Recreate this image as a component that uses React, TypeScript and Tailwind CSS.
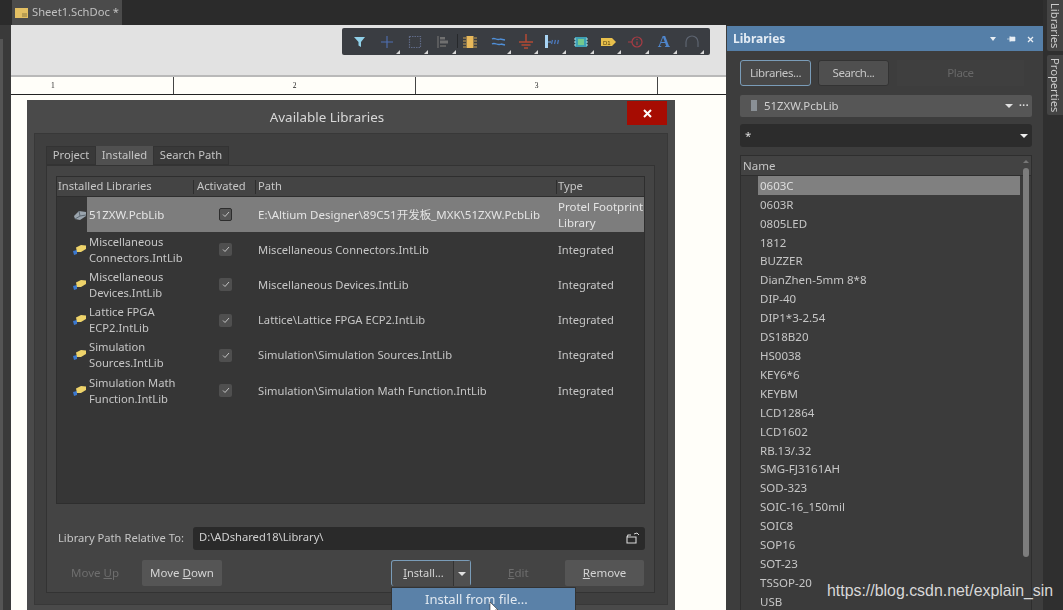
import React from "react";

const F = "font-['Noto_Sans','Open_Sans',sans-serif]";

function Tri() {
  return <span className="absolute right-[1px] bottom-[1px] w-0 h-0 border-l-[4px] border-l-transparent border-b-[4px] border-b-[#d8d8d8]" />;
}

const noTri = [0, 4];

const toolIcons: React.ReactNode[] = [
  <svg key="0" width="14" height="12" viewBox="0 0 14 12"><path d="M1 1h11L8 6v5L5.500 9.500V6z" fill="#8fd0e8" /></svg>,
  <svg key="1" width="14" height="14" viewBox="0 0 14 14"><path d="M7 1v12M1 7h12" stroke="#4f70b4" strokeWidth="1.100" /></svg>,
  <svg key="2" width="14" height="14" viewBox="0 0 14 14"><rect x="1.500" y="1.500" width="11" height="11" fill="none" stroke="#5f6a86" strokeWidth="1.200" strokeDasharray="1.500 1" /></svg>,
  <svg key="3" width="12" height="14" viewBox="0 0 12 14"><path d="M1 1v12" stroke="#707070" strokeWidth="1.200" /><rect x="3" y="2" width="5" height="2.500" fill="#707070" /><rect x="3" y="5.500" width="8" height="3" fill="#707070" /><rect x="3" y="10" width="6" height="2" fill="#5f5f5f" /></svg>,
  <svg key="4" width="14" height="14" viewBox="0 0 14 14"><rect x="3.500" y="1" width="7" height="12" fill="#e9b95a" /><path d="M0 3h3M0 6h3M0 9h3M0 12h3M11 3h3M11 6h3M11 9h3M11 12h3" stroke="#c9a252" /></svg>,
  <svg key="5" width="15" height="12" viewBox="0 0 15 12"><path d="M1 3c3-2 5 2 8 0M1 8c3-2 6 2 9 0M9 3l5 1M10 8l4 1" fill="none" stroke="#4f8fd8" strokeWidth="1.300" /></svg>,
  <svg key="6" width="14" height="15" viewBox="0 0 14 15"><path d="M7 0v8M0 8h14M2.500 11h9M5 14h4" stroke="#b44a34" strokeWidth="1.500" /></svg>,
  <svg key="7" width="16" height="14" viewBox="0 0 16 14"><rect x="0" y="0" width="3" height="13" fill="#a8d4f4" /><path d="M3 7h3" stroke="#6fa8e0" /><path d="M6.500 9l1-4M9.500 9l1-4M12.500 9l1-4" stroke="#4b77ba" strokeWidth="1.300" /></svg>,
  <svg key="8" width="14" height="12" viewBox="0 0 14 12"><rect x="1" y="1" width="12" height="10" fill="#3fa0b4" /><rect x="4" y="3" width="6" height="6" fill="#74c98e" /><path d="M0 3h2M0 6h2M0 9h2M12 3h2M12 6h2M12 9h2" stroke="#b8dce0" /></svg>,
  <svg key="9" width="15" height="10" viewBox="0 0 15 10"><path d="M0 1h11l4 4-4 4H0z" fill="#e9c04c" /><text x="2" y="7.500" fontSize="6" fill="#4a3a10" fontFamily="Liberation Sans">D1</text></svg>,
  <svg key="10" width="16" height="14" viewBox="0 0 16 14"><circle cx="9" cy="7" r="5" fill="none" stroke="#a93c44" strokeWidth="1.200" /><path d="M9 4v1M9 6.500V10M0 7h4" stroke="#a93c44" strokeWidth="1.200" /></svg>,
  <span key="11" className="text-[17px] leading-none font-bold text-[#4f86cc] font-['Liberation_Serif',serif]">A</span>,
  <svg key="12" width="14" height="13" viewBox="0 0 14 13"><path d="M1 12V7a6 6 0 0 1 12 0v5" fill="none" stroke="#5d6470" strokeWidth="1.200" /></svg>,
];

function LibIcon({ pcb }: { pcb?: boolean }) {
  if (pcb)
    return (
      <svg width="14" height="12" viewBox="0 0 14 12" className="shrink-0">
        <path d="M1 7l5-5 7 1v4l-6 4-5-1z" fill="#9aa4ad" />
        <path d="M6 2l1 5-5 3M7 7l6-1" stroke="#5b6670" fill="none" />
      </svg>
    );
  return (
    <svg width="14" height="12" viewBox="0 0 14 12" className="shrink-0">
      <path d="M0 7l4-1v4l-3 1z" fill="#3b78d0" />
      <path d="M3 3.500l5-2.500 5 .5v3.500L8 8H4z" fill="#eed36a" />
    </svg>
  );
}

function Check({ active }: { active?: boolean }) {
  return (
    <span className={`w-[13px] h-[13px] rounded-[2px] flex items-center justify-center ${active ? "bg-[#565656] border border-[#2d2d2d]" : "bg-[#4f4f4f]"}`}>
      <svg width="8" height="7" viewBox="0 0 8 7"><path d="M1 3.500l2 2 4-4.500" fill="none" stroke="#c4c4c4" strokeWidth="1" /></svg>
    </span>
  );
}

const rows = [
  { n: ["51ZXW.PcbLib"], p: "E:\\Altium Designer\\89C51开发板_MXK\\51ZXW.PcbLib", t: ["Protel Footprint", "Library"], sel: true },
  { n: ["Miscellaneous", "Connectors.IntLib"], p: "Miscellaneous Connectors.IntLib", t: ["Integrated"] },
  { n: ["Miscellaneous", "Devices.IntLib"], p: "Miscellaneous Devices.IntLib", t: ["Integrated"] },
  { n: ["Lattice FPGA", "ECP2.IntLib"], p: "Lattice\\Lattice FPGA ECP2.IntLib", t: ["Integrated"] },
  { n: ["Simulation", "Sources.IntLib"], p: "Simulation\\Simulation Sources.IntLib", t: ["Integrated"] },
  { n: ["Simulation Math", "Function.IntLib"], p: "Simulation\\Simulation Math Function.IntLib", t: ["Integrated"] },
];

const parts = ["0603C","0603R","0805LED","1812","BUZZER","DianZhen-5mm 8*8","DIP-40","DIP1*3-2.54","DS18B20","HS0038","KEY6*6","KEYBM","LCD12864","LCD1602","RB.13/.32","SMG-FJ3161AH","SOD-323","SOIC-16_150mil","SOIC8","SOP16","SOT-23","TSSOP-20","USB"];

function Caret({ c = "#e0e0e0" }: { c?: string }) {
  return <span className="w-0 h-0 border-l-[4px] border-r-[4px] border-t-[4px] border-l-transparent border-r-transparent" style={{ borderTopColor: c }} />;
}

export default function App() {
  return (
    <div className="relative w-[1063px] h-[610px] overflow-hidden">
      <div className={`w-[1063px] h-[610px] overflow-hidden flex flex-col bg-[#2c2c2c] text-[11.2px] text-[#c6c6c6] blur-[0.4px] ${F}`}>
        <div className="h-[25px] shrink-0 flex bg-[#2b2b2b] pl-[12px]">
          <div className="w-[110px] flex items-center gap-[4px] pl-[3px] bg-[#4b4b4b] text-[#c0c0c0]">
            <svg width="13" height="10" viewBox="0 0 13 10"><rect width="13" height="10" fill="#e3bf63" /><path d="M7 6h5M7 8h5" stroke="#8d7a42" /></svg>
            <span>Sheet1.SchDoc *</span>
          </div>
        </div>
        <div className="flex-1 min-h-0 flex">
          <div className="w-[11px] shrink-0 bg-[#3a3a3a] pt-[14px]">
            <div className="w-[3px] h-full bg-[#555]" />
          </div>
          <div className="w-[715px] shrink-0 flex flex-col bg-[#fffef9]">
            <div className="h-[52px] shrink-0 bg-[#e2e2e2] border-b-[2px] border-[#b9b9b9] pt-[3px] pl-[331px]">
              <div className="w-[368px] h-[27px] rounded-[2px] bg-[#3a3d42] flex items-center pl-[4px]">
                {toolIcons.map((ic, i) => (
                  <div key={i} className="relative w-[27.650px] h-full flex items-center justify-center">
                    {ic}
                    {noTri.includes(i) ? null : <Tri />}
                    {i === 4 ? <span className="absolute left-0 top-[6px] w-px h-[14px] bg-[#26282b]" /> : null}
                  </div>
                ))}
              </div>
            </div>
            <div className="h-[18px] shrink-0 border-b border-[#222] flex text-[7.500px] text-[#222] font-['Liberation_Serif',serif]">
              <div className="w-[163px] border-r border-[#444] flex items-center justify-start pl-[40px]">1</div>
              <div className="w-[242px] border-r border-[#444] flex items-center justify-center">2</div>
              <div className="w-[242px] border-r border-[#444] flex items-center justify-center">3</div>
              <div className="flex-1" />
            </div>
            <div className="flex-1 min-h-0 pl-[16px] pt-[5px]">
              <div className="relative w-[648px] h-[520px] bg-[#4a4a4a] flex flex-col">
                <div className="h-[33px] shrink-0 flex items-center justify-center pr-[48px] pt-[1px] text-[13.400px] text-[#d8d8d8]">Available Libraries</div>
                <button className="absolute right-[8px] top-[1px] w-[40px] h-[24px] bg-[#a60c02] flex items-center justify-center">
                  <svg width="9" height="9" viewBox="0 0 9 9"><path d="M1 1l7 7M8 1l-7 7" stroke="#fff" strokeWidth="2" /></svg>
                </button>
                <div className="mx-[7px] h-[472px] shrink-0 bg-[#3f3f3f] border border-[#383838] pt-[12px] px-[11px]">
                  <div className="flex h-[19px] text-[#c4c4c4]">
                    <div className="w-[50px] flex items-center justify-center bg-[#393939] border border-[#333]">Project</div>
                    <div className="w-[57px] flex items-center justify-center bg-[#505050]">Installed</div>
                    <div className="w-[76px] flex items-center justify-center bg-[#393939] border border-[#333]">Search Path</div>
                  </div>
                  <div className="w-[609px] h-[428px] border border-[#333] bg-[#444] pt-[10px] px-[9px] flex flex-col">
                    <div className="w-[589px] h-[328px] shrink-0 border border-[#2e2e2e] bg-[#363636]">
                      <div className="h-[20px] flex items-center bg-[#444] border-b border-[#2e2e2e]">
                        <div className="w-[137px] pl-[1px] border-r border-[#2e2e2e] h-[14px] flex items-center">Installed Libraries</div>
                        <div className="w-[62px] pl-[3px] border-r border-[#2e2e2e] h-[14px] flex items-center">Activated</div>
                        <div className="w-[301px] pl-[2px] border-r border-[#2e2e2e] h-[14px] flex items-center">Path</div>
                        <div className="pl-[1px] h-[14px] flex items-center">Type</div>
                      </div>
                      {rows.map((r) => (
                        <div key={r.p} className="h-[35.200px] flex items-center leading-[16px]">
                          <div className="w-[30px] shrink-0 flex justify-end -mr-[1px]"><LibIcon pcb={r.sel} /></div>
                          <div className={`flex-1 h-full flex items-center ${r.sel ? "bg-[#7d7d7d] text-[#e4e4e4] text-[11.500px] ml-[1px]" : "ml-[1px]"}`}>
                            <div className="w-[107px] shrink-0 pl-[2px]">{r.n.map((x) => <div key={x}>{x}</div>)}</div>
                            <div className="w-[62px] shrink-0 flex justify-center pl-[1px]"><Check active={r.sel} /></div>
                            <div className="w-[300px] shrink-0 pl-[2px] whitespace-nowrap font-['Noto_Sans','Noto_Sans_CJK_SC',sans-serif]">{r.p}</div>
                            <div className="pl-[2px]">{r.t.map((x) => <div key={x} className="whitespace-nowrap">{x}</div>)}</div>
                          </div>
                        </div>
                      ))}
                    </div>
                    <div className="mt-[22px] h-[24px] flex items-center shrink-0">
                      <span className="w-[137px] pl-[2px] shrink-0">Library Path Relative To:</span>
                      <div className="flex-1 h-[23px] rounded-[3px] bg-[#2a2a2a] flex items-center justify-between pl-[6px] pr-[4px] pb-[1px] text-[#d0d0d0]">
                        <span>D:\ADshared18\Library\</span>
                        <svg width="15" height="12" viewBox="0 0 15 12"><path d="M1 5h9v6H1zM1 5l1-2h3" fill="none" stroke="#d8d8d8" strokeWidth="1.100" /><path d="M8 2l3-1 2 2" fill="none" stroke="#d8d8d8" /></svg>
                      </div>
                    </div>
                    <div className="mt-[10px] h-[26px] flex items-center relative shrink-0 text-[11.500px]">
                      <span className="w-[80px] pl-[15px] text-[#6e6e6e]">Move <u>U</u>p</span>
                      <div className="ml-[6px] w-[80px] h-[26px] rounded-[2px] bg-[#555] flex items-center justify-center text-[#d4d4d4]"><span>Move <u>D</u>own</span></div>
                      <div className="ml-[169px] w-[80px] h-[26px] rounded-[3px] border border-[#7a9cb8] border-b-0 bg-[#4a4a4a] flex">
                        <div className="w-[61px] pl-[2px] flex items-center justify-center text-[#d4d4d4] text-[11px]"><span><u>I</u>nstall...</span></div>
                        <div className="flex-1 border-l border-[#333] bg-[#505050] flex items-center justify-center"><Caret /></div>
                      </div>
                      <span className="w-[94px] pl-[37px] text-[#6e6e6e]"><u>E</u>dit</span>
                      <div className="w-[79px] h-[26px] rounded-[2px] bg-[#555] flex items-center justify-center text-[#d4d4d4]"><span><u>R</u>emove</span></div>
                      <div className="absolute left-[336px] top-[28px] w-[183px] h-[30px] bg-[#5a81a8] pl-[33px] pt-[2px] text-[13px] text-[#e0e8f0] shadow-[0_0_0_1px_#333]">
                        Install from file...
                        <svg className="absolute left-[97px] top-[14px]" width="10" height="14" viewBox="0 0 10 14"><path d="M1 0v11l3-2 2 4 2-1-2-4h3z" fill="#fff" stroke="#333" strokeWidth=".6" /></svg>
                      </div>
                    </div>
                  </div>
                </div>
              </div>
            </div>
          </div>
          <div className="w-[317px] shrink-0 pl-[1px] bg-[#3d3d3d] flex flex-col mt-[1px] text-[11.500px]">
            <div className="h-[25px] shrink-0 bg-[#557fa8] flex items-center justify-between pl-[6px] pr-[9px] pt-[1px]">
              <span className="text-[12px] font-bold text-[#e4ecf4]">Libraries</span>
              <div className="flex items-center gap-[9px]">
                <span className="w-0 h-0 border-l-[3px] border-r-[3px] border-t-[4px] border-l-transparent border-r-transparent border-t-[#e8eef4]" />
                <svg width="9" height="7" viewBox="0 0 9 7" className="mx-[2px]"><path d="M3 1h5v4H3zM0 3h3M3 0v6" fill="#e8eef4" stroke="#e8eef4" strokeWidth=".6" /></svg>
                <svg width="7" height="7" viewBox="0 0 7 7"><path d="M1 1l5 5M6 1L1 6" stroke="#e8eef4" strokeWidth="1.300" /></svg>
              </div>
            </div>
            <div className="pl-[13px] pr-[10px] flex-1 min-h-0 flex flex-col">
              <div className="flex h-[26px] mt-[9px] shrink-0 gap-[7px] tracking-[-0.4px]">
                <div className="w-[71px] rounded-[3px] border border-[#7a9cb8] bg-[#484848] flex items-center justify-center">Libraries...</div>
                <div className="w-[71px] rounded-[3px] bg-[#4f4f4f] border border-[#333] flex items-center justify-center">Search...</div>
                <div className="w-[127px] ml-[1px] flex items-center justify-center text-[#686868] bg-[#3f3f3f]">Place</div>
              </div>
              <div className="mt-[9px] h-[22px] w-[292px] shrink-0 rounded-[2px] bg-[#565656] flex items-center justify-between pl-[11px] pr-[3px] text-[11.400px] text-[#cfcfcf]">
                <span className="flex items-center gap-[7px]"><span className="w-[6px] h-[11px] bg-[#8a9096]" />51ZXW.PcbLib</span>
                <span className="flex items-center gap-[6px]"><Caret /><span className="text-[10px] font-bold leading-none tracking-[0.5px] text-[#e0e0e0] -mt-[3px]">···</span></span>
              </div>
              <div className="mt-[7px] h-[23px] w-[292px] shrink-0 rounded-[3px] bg-[#2c2c2c] flex items-center justify-between pl-[5px] pr-[4px] text-[#ddd]">
                <span>*</span><Caret c="#eee" />
              </div>
              <div className="relative mt-[8px] w-[292px] flex-1 min-h-0 bg-[#3b3b3b] border border-[#2e2e2e] border-b-0 overflow-hidden">
                <div className="h-[20px] flex items-center pl-[2px] border-b border-[#2e2e2e] bg-[#434343]">Name</div>
                <div className="pl-[17px] pr-[11px]">
                  {parts.map((p, i) => (
                    <div key={p} className={`h-[18.910px] flex items-center pl-[2px] whitespace-nowrap ${i === 0 ? "bg-[#808080] text-[#ddd]" : ""}`}>{p}</div>
                  ))}
                </div>
                <div className="absolute right-[2px] top-[12px] w-[6px] h-[389px] rounded-[3px] bg-[#7d7d7d]" />
                <span className="absolute right-[2px] top-[4px] w-0 h-0 border-l-[3px] border-r-[3px] border-b-[3px] border-l-transparent border-r-transparent border-b-[#777]" />
              </div>
            </div>
          </div>
          <div className="w-[20px] shrink-0 flex flex-col items-end -mt-[25px] gap-[4px] bg-[#2f2f2f] relative text-[11.200px]">
            <div className="w-[16px] h-[51px] rounded-bl-[2px] bg-[#444] flex items-center justify-center"><span className="[writing-mode:vertical-rl] text-[#ccc]">Libraries</span></div>
            <div className="w-[16px] h-[60px] rounded-l-[2px] bg-[#444] flex items-center justify-center"><span className="[writing-mode:vertical-rl] text-[#ccc]">Properties</span></div>
          </div>
        </div>
      </div>
      <div className="absolute left-[827px] top-[581px] text-[15.900px] leading-[20px] text-[#d8d8d8] font-['Liberation_Sans',sans-serif] whitespace-nowrap">https://blog.csdn.net/explain_sin</div>
    </div>
  );
}
